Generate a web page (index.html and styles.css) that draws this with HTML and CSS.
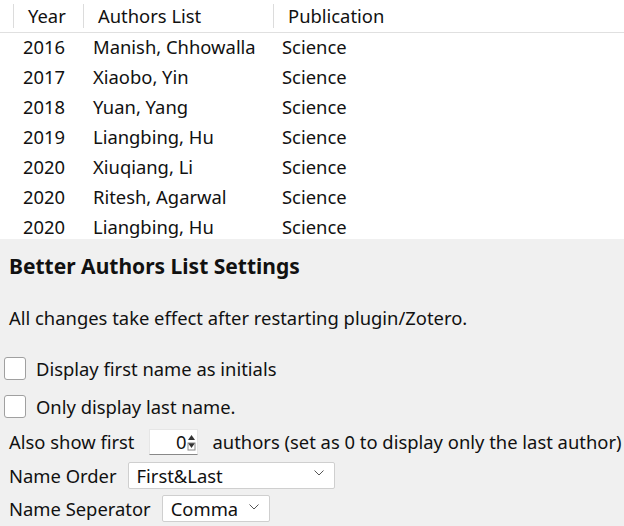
FILE: index.html
```html
<!DOCTYPE html>
<html>
<head>
<meta charset="utf-8">
<link rel="stylesheet" href="styles.css">
</head>
<body>
<div class="table">
  <div class="thead">
    <div class="th c-year">Year</div>
    <div class="th c-auth">Authors List</div>
    <div class="th c-pub">Publication</div>
  </div>
  <div class="row"><span class="c-year">2016</span><span class="c-auth">Manish, Chhowalla</span><span class="c-pub">Science</span></div>
  <div class="row"><span class="c-year">2017</span><span class="c-auth">Xiaobo, Yin</span><span class="c-pub">Science</span></div>
  <div class="row"><span class="c-year">2018</span><span class="c-auth">Yuan, Yang</span><span class="c-pub">Science</span></div>
  <div class="row"><span class="c-year">2019</span><span class="c-auth">Liangbing, Hu</span><span class="c-pub">Science</span></div>
  <div class="row"><span class="c-year">2020</span><span class="c-auth">Xiuqiang, Li</span><span class="c-pub">Science</span></div>
  <div class="row"><span class="c-year">2020</span><span class="c-auth">Ritesh, Agarwal</span><span class="c-pub">Science</span></div>
  <div class="row"><span class="c-year">2020</span><span class="c-auth">Liangbing, Hu</span><span class="c-pub">Science</span></div>
</div>
<div class="panel">
  <h1 class="title">Better Authors List Settings</h1>
  <p class="desc">All changes take effect after restarting plugin/Zotero.</p>
  <label class="check first"><span class="box"></span>Display first name as initials</label>
  <label class="check"><span class="box"></span>Only display last name.</label>
  <div class="line">Also show first <span class="spin"><span class="num">0</span><svg class="arrows" width="9" height="18" viewBox="0 0 9 18"><path d="M4.5 2 L8 7 L1 7 Z" fill="#333"/><path d="M1 10 L8 10 L4.5 15 Z" fill="#333"/><rect x="1" y="10" width="7" height="7" fill="none" stroke="#888" stroke-width="1"/></svg></span> authors (set as 0 to display only the last author)</div>
  <div class="line">Name Order <span class="select wide">First&amp;Last<svg class="chev" width="10" height="6" viewBox="0 0 10 6"><path d="M0.5 0.5 L5 5 L9.5 0.5" fill="none" stroke="#555" stroke-width="1"/></svg></span></div>
  <div class="line">Name Seperator <span class="select narrow">Comma<svg class="chev" width="10" height="6" viewBox="0 0 10 6"><path d="M0.5 0.5 L5 5 L9.5 0.5" fill="none" stroke="#555" stroke-width="1"/></svg></span></div>
</div>
</body>
</html>
```
FILE: styles.css
```css
html, body {
  margin: 0;
  padding: 0;
}
body {
  width: 624px;
  height: 526px;
  overflow: hidden;
  font-family: "Noto Sans", "Noto Sans CJK SC", sans-serif;
  font-size: 18.4px;
  color: #111;
  background: #f0f0f0;
}
.table {
  background: #fff;
  height: 239px;
  overflow: hidden;
}
.thead {
  display: flex;
  height: 32px;
  border-bottom: 1px solid #e0e0e0;
  align-items: center;
}
.th {
  height: 24px;
  line-height: 24px;
  border-left: 1px solid #dcdcdc;
  box-sizing: border-box;
  padding-left: 14px;
}
.thead .c-year { margin-left: 13px; width: 70px; }
.thead .c-auth { width: 190px; }
.thead .c-pub { flex: 1; }
.row {
  display: flex;
  height: 30px;
  line-height: 28px;
}
.row .c-year { padding-left: 23px; width: 70px; }
.row .c-auth { width: 189px; }
.row .c-pub { flex: 1; }
.panel {
  padding: 0 0 0 9px;
}
.title {
  margin: 0;
  font-size: 21px;
  font-weight: bold;
  height: 54px;
  line-height: 54px;
}
.desc {
  margin: 0;
  height: 49px;
  line-height: 49px;
}
.check {
  display: flex;
  align-items: center;
  height: 38px;
  margin-left: -5px;
}
.check.first { margin-top: 7px; }
.box {
  width: 22px;
  height: 23px;
  box-sizing: border-box;
  border: 1px solid #a0a0a0;
  border-radius: 3px;
  background: #fff;
  margin-right: 10px;
}
.line {
  display: flex;
  align-items: center;
  height: 33.5px;
  white-space: nowrap;
}
.spin {
  display: inline-flex;
  align-items: center;
  justify-content: flex-end;
  width: 49px;
  height: 26px;
  box-sizing: border-box;
  background: #fff;
  border: 1px solid #e6e6e6;
  border-bottom: 1px solid #888;
  margin: 0 15px 0 14px;
  padding-right: 1px;
}
.select {
  display: inline-flex;
  align-items: center;
  justify-content: space-between;
  height: 27px;
  box-sizing: border-box;
  background: #fff;
  border: 1px solid #cfcfcf;
  border-radius: 2px;
  padding: 0 10px 0 8px;
  margin-left: 11px;
}
.wide { width: 207px; }
.narrow { width: 108px; }
.chev { margin-bottom: 4px; }
```
